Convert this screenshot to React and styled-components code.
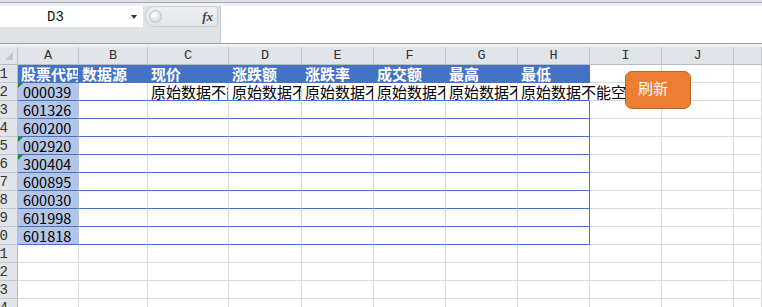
import React from 'react';
import styled, { createGlobalStyle } from 'styled-components';

const GlobalStyle = createGlobalStyle`
  html, body {
    margin: 0;
    padding: 0;
    background: #ffffff;
  }
  body {
    font-family: 'Noto Sans CJK SC', 'Noto Sans', sans-serif;
  }
`;

// palette
const BLUE = '#4472c4';
const CODE_BG = '#b4c6e7';
const GRID = '#dadada';
const HEAD_BG = '#e1e4e8';
const HEAD_LINE = '#c3c7cc';

const COLS = ['A', 'B', 'C', 'D', 'E', 'F', 'G', 'H', 'I', 'J', 'K'];
const HEADERS = ['股票代码', '数据源', '现价', '涨跌额', '涨跌率', '成交额', '最高', '最低'];
const CODES = ['000039', '601326', '600200', '002920', '300404', '600895', '600030', '601998', '601818'];
const MSG = '原始数据不能空';
const ROW_COUNT = 14;

const Window = styled.div`
  width: 762px;
  height: 307px;
  overflow: hidden;
  background: #ffffff;
`;

const TopEdge = styled.div`
  height: 6px;
  background: linear-gradient(
    to bottom,
    #dde0e5 0,
    #dde0e5 2px,
    #a7abb1 2px,
    #a7abb1 3px,
    #eef0f3 3px
  );
`;

const FormulaRow = styled.div`
  display: flex;
  height: 37px;
`;

const LeftPane = styled.div`
  width: 220px;
  display: flex;
  flex-direction: column;
  background: #dfe3e8;
`;

const NameRow = styled.div`
  display: flex;
  height: 21px;
`;

const NameBox = styled.div`
  width: 143px;
  background: #ffffff;
  display: flex;
  align-items: center;
  position: relative;
  padding-left: 47px;
  box-sizing: border-box;
  font-family: 'Liberation Mono', monospace;
  font-size: 14px;
  color: #111;
`;

const DropArrow = styled.span`
  position: absolute;
  left: 131px;
  top: 9px;
  width: 0;
  height: 0;
  border-left: 3.5px solid transparent;
  border-right: 3.5px solid transparent;
  border-top: 4px solid #333;
`;

const FxGroup = styled.div`
  flex: 1;
  margin-left: 2px;
  margin-right: 2px;
  display: flex;
  align-items: center;
  justify-content: space-between;
  background: linear-gradient(to bottom, #eef0f3, #e3e6ea);
  border: 1px solid #c9cdd2;
  border-radius: 10px 3px 3px 10px;
  box-sizing: border-box;
  padding: 0 4px 0 3px;
`;

const Grip = styled.span`
  width: 11px;
  height: 11px;
  border-radius: 50%;
  background: radial-gradient(circle at 40% 35%, #ffffff, #c9cdd3);
  border: 1px solid #bfc3c9;
`;

const FxLabel = styled.span`
  font-family: 'Liberation Serif', serif;
  font-style: italic;
  font-weight: bold;
  font-size: 13px;
  color: #444;
`;

const FormulaInput = styled.div`
  flex: 1;
  background: #ffffff;
  border-left: 1px solid #c6cad0;
`;

const Divider = styled.div`
  height: 3px;
  border-top: 1px solid #9ea3a9;
  background: #eef0f2;
`;

const Sheet = styled.div`
  position: relative;
`;

const Grid = styled.div`
  display: grid;
  grid-template-columns: 18px 61px 69px 81px 73px 72px 72px 72px 72px 72px 72px 1fr;
  grid-auto-rows: 18px;
`;

const ColHead = styled.div`
  box-sizing: border-box;
  background: ${HEAD_BG};
  border-right: 1px solid ${HEAD_LINE};
  border-bottom: 1px solid #b8bcc2;
  display: flex;
  align-items: center;
  justify-content: center;
  font-family: 'Liberation Mono', monospace;
  font-size: 13.5px;
  color: #333;
`;

const Corner = styled(ColHead)`
  position: relative;
  &::after {
    content: '';
    position: absolute;
    right: 4px;
    bottom: 4px;
    width: 0;
    height: 0;
    border-left: 8px solid transparent;
    border-bottom: 8px solid #c4c8cd;
  }
`;

const RowHead = styled.div`
  box-sizing: border-box;
  background: ${HEAD_BG};
  border-right: 1px solid #b8bcc2;
  border-bottom: 1px solid ${HEAD_LINE};
  display: flex;
  align-items: center;
  justify-content: flex-end;
  overflow: hidden;
  padding-right: 9px;
  font-family: 'Liberation Mono', monospace;
  font-size: 14px;
  color: #333;
`;

const Cell = styled.div`
  position: relative;
  box-sizing: border-box;
  min-width: 0;
  background: ${(p) => p.$bg || 'transparent'};
  border-right: 1px solid ${(p) => p.$right || GRID};
  border-bottom: 1px solid ${(p) => p.$bottom || GRID};
  display: flex;
  align-items: center;
  padding-left: ${(p) => (p.$code ? '5px' : '3px')};
  white-space: nowrap;
  overflow: ${(p) => (p.$spill ? 'visible' : 'hidden')};
  z-index: ${(p) => (p.$spill ? 1 : 'auto')};
  font-family: 'Noto Sans CJK SC', sans-serif;
  font-size: ${(p) => (p.$code ? '14.5px' : '15px')};
  font-weight: ${(p) => (p.$bold ? 700 : 400)};
  color: ${(p) => (p.$bold ? '#ffffff' : '#000000')};
  line-height: 17px;

  &::before {
    content: '';
    display: ${(p) => (p.$flag ? 'block' : 'none')};
    position: absolute;
    left: 0;
    top: 0;
    width: 0;
    height: 0;
    border-top: 5px solid #1f8a22;
    border-right: 5px solid transparent;
  }
`;

const RefreshButton = styled.div`
  position: absolute;
  left: 625px;
  top: 24px;
  width: 66px;
  height: 38px;
  box-sizing: border-box;
  background: #ed7d31;
  border: 1px solid #b9662b;
  border-radius: 7px;
  padding: 7px 0 0 12px;
  font-family: 'Noto Sans CJK SC', sans-serif;
  font-size: 15px;
  line-height: 18px;
  color: #ffffff;
`;

function cellProps(r, c) {
  const inTable = c <= 7;
  const props = {};
  if (r === 1 && inTable) {
    props.$bg = BLUE;
    props.$right = BLUE;
    props.$bottom = BLUE;
    props.$bold = true;
    props.children = HEADERS[c];
    return props;
  }
  if (r >= 2 && r <= 10 && inTable) {
    props.$bottom = BLUE;
    if (c === 0) {
      const code = CODES[r - 2];
      props.$bg = CODE_BG;
      props.$right = CODE_BG;
      props.$code = true;
      props.$flag = code[0] === '0' || code[0] === '3';
      props.children = code;
    }
    if (c === 7) props.$right = r === 2 ? 'transparent' : BLUE;
  }
  if (r === 2 && c >= 2 && c <= 7) {
    props.children = MSG;
    if (c === 7) props.$spill = true;
  }
  return props;
}

export default function App() {
  const rows = [];
  for (let r = 1; r <= ROW_COUNT; r++) {
    rows.push(<RowHead key={`h${r}`}>{r}</RowHead>);
    COLS.forEach((col, c) => {
      const { children, ...rest } = cellProps(r, c);
      rows.push(
        <Cell key={`${col}${r}`} {...rest}>
          {children}
        </Cell>
      );
    });
  }

  return (
    <Window>
      <GlobalStyle />
      <TopEdge />
      <FormulaRow>
        <LeftPane>
          <NameRow>
            <NameBox>
              D3
              <DropArrow />
            </NameBox>
            <FxGroup>
              <Grip />
              <FxLabel>fx</FxLabel>
            </FxGroup>
          </NameRow>
        </LeftPane>
        <FormulaInput />
      </FormulaRow>
      <Divider />
      <Sheet>
        <Grid>
          <Corner />
          {COLS.map((col) => (
            <ColHead key={col}>{col === 'K' ? '' : col}</ColHead>
          ))}
          {rows}
        </Grid>
        <RefreshButton>刷新</RefreshButton>
      </Sheet>
    </Window>
  );
}
